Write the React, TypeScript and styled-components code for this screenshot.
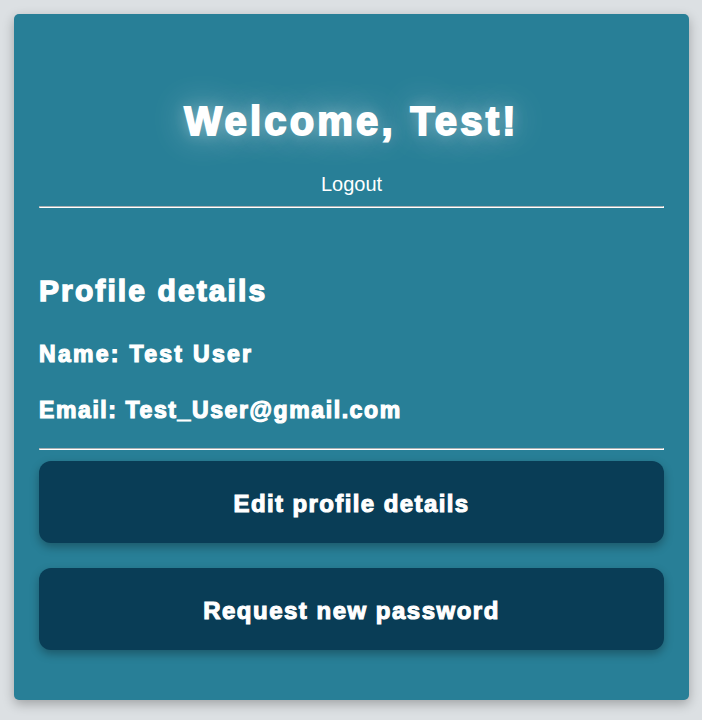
import React from "react";
import styled, { createGlobalStyle } from "styled-components";

const GlobalStyle = createGlobalStyle`
  html, body {
    margin: 0;
    padding: 0;
    background: #dce0e3;
    font-family: "Liberation Sans", Arial, sans-serif;
  }
`;

const Page = styled.div`
  padding: 14px 13px 20px 14px;
`;

const Card = styled.main`
  width: 675px;
  box-sizing: border-box;
  background: #287f97;
  border-radius: 5px;
  box-shadow: 0 4px 12px rgba(0, 0, 0, 0.28);
  padding: 83px 25px 50px;
  display: flex;
  flex-direction: column;
  color: #fff;
`;

const Title = styled.h1`
  margin: 0;
  font-size: 40px;
  line-height: 48px;
  font-weight: 700;
  letter-spacing: 3.2px;
  -webkit-text-stroke: 1.8px #fff;
  text-align: center;
  text-shadow: 0 0 34px rgba(255, 255, 255, 0.6), 0 0 14px rgba(255, 255, 255, 0.3);
`;

const LogoutLink = styled.a`
  margin-top: 27px;
  align-self: center;
  font-size: 20px;
  line-height: 24px;
  color: #fff;
  text-decoration: none;
  cursor: pointer;
`;

const Rule = styled.hr<{ $top: number }>`
  margin: ${(p) => p.$top}px 0 0;
  height: 0;
  border-style: solid;
  border-width: 1px;
  border-color: #a9b0b3 #ffffff #ffffff #a9b0b3;
`;

const SectionTitle = styled.h2`
  margin: 65px 0 0;
  font-size: 30px;
  line-height: 36px;
  font-weight: 700;
  letter-spacing: 2.1px;
  -webkit-text-stroke: 1.4px #fff;
`;

const Detail = styled.h3<{ $top: number; $spacing: number }>`
  margin: ${(p) => p.$top}px 0 0;
  font-size: 23px;
  line-height: 28px;
  font-weight: 700;
  letter-spacing: ${(p) => p.$spacing}px;
  -webkit-text-stroke: 1.2px #fff;
`;

const ActionButton = styled.button<{ $top: number; $spacing: number }>`
  margin-top: ${(p) => p.$top}px;
  height: 82px;
  width: 100%;
  border: none;
  border-radius: 12px;
  background: #093d56;
  color: #fff;
  font-family: "Liberation Sans", Arial, sans-serif;
  font-size: 24px;
  line-height: 28px;
  font-weight: 700;
  letter-spacing: ${(p) => p.$spacing}px;
  -webkit-text-stroke: 1.1px #fff;
  padding: 3px 0 0;
  display: flex;
  align-items: center;
  justify-content: center;
  box-shadow: 0 4px 10px rgba(0, 0, 0, 0.3);
  cursor: pointer;
`;

export default function App() {
  return (
    <>
      <GlobalStyle />
      <Page>
        <Card>
          <Title>Welcome, Test!</Title>
          <LogoutLink>Logout</LogoutLink>
          <Rule $top={10} />
          <SectionTitle>Profile details</SectionTitle>
          <Detail $top={31} $spacing={2.3}>Name: Test User</Detail>
          <Detail $top={28} $spacing={1.6}>Email: Test_User@gmail.com</Detail>
          <Rule $top={24} />
          <ActionButton $top={11} $spacing={1.4}>Edit profile details</ActionButton>
          <ActionButton $top={25} $spacing={1.5}>Request new password</ActionButton>
        </Card>
      </Page>
    </>
  );
}
